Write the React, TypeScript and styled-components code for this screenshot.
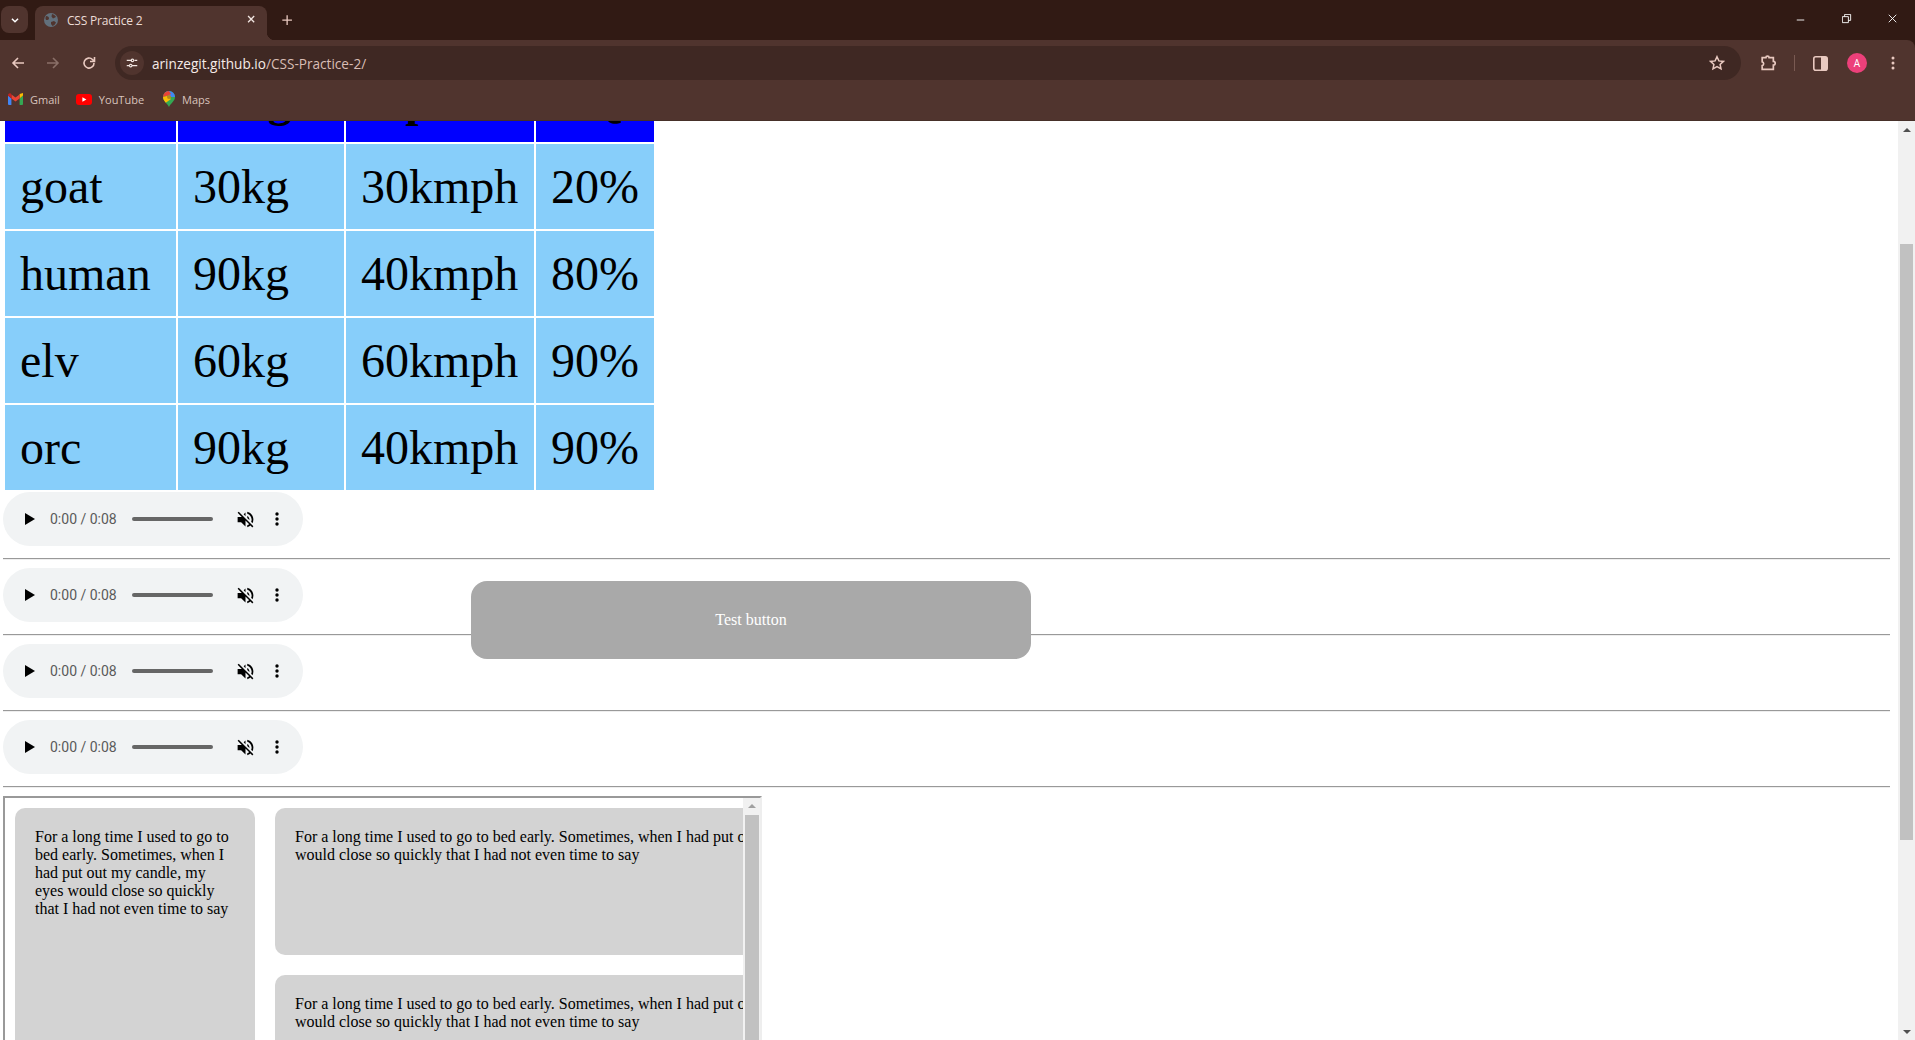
import * as React from "react"
import styled, { createGlobalStyle } from "styled-components"

const rows = [
  ["goat", "30kg", "30kmph", "20%"],
  ["human", "90kg", "40kmph", "80%"],
  ["elv", "60kg", "60kmph", "90%"],
  ["orc", "90kg", "40kmph", "90%"],
]
const columns = [
  { title: "Name", width: 171 },
  { title: "Weight", width: 166 },
  { title: "Speed", width: 188 },
  { title: "IQ", width: 118 },
]
const story = "For a long time I used to go to bed early. Sometimes, when I had put out my candle, my eyes would close so quickly that I had not even time to say"
const ICON = "#e9c9c0"

const GlobalStyle = createGlobalStyle`
  html, body {
    margin: 0;
    height: 100%;
    overflow: hidden;
    background: #fff;
  }
`

const Shell = styled.div`
  display: flex;
  flex-direction: column;
  height: 100vh;
  font-family: "Liberation Serif", serif;
`

const Browser = styled.header`
  position: relative;
  z-index: 1;
  flex: none;
  height: 121px;
  background: #311a14;
  font-family: "Open Sans", "Noto Sans", sans-serif;
`

const TitleBar = styled.div`
  display: flex;
  align-items: flex-start;
  height: 40px;
  padding: 6px 0 0 1px;
  box-sizing: border-box;
`

const TabListButton = styled.div`
  display: flex;
  align-items: center;
  justify-content: center;
  width: 27px;
  height: 27px;
  border-radius: 8px;
  background: #50342e;
`

const Tab = styled.div`
  position: relative;
  display: flex;
  align-items: center;
  width: 232px;
  height: 34px;
  margin-left: 7px;
  padding: 0 8px 6px 9px;
  box-sizing: border-box;
  background: #50342e;
  border-radius: 8px 8px 0 0;

  &::after {
    content: "";
    position: absolute;
    right: -8px;
    bottom: 0;
    width: 8px;
    height: 8px;
    background: radial-gradient(circle at 100% 0, transparent 8px, #50342e 8.5px);
  }
`

const TabTitle = styled.span`
  flex: 1;
  margin-left: 9px;
  font-size: 12px;
  letter-spacing: -0.2px;
  color: #ecdcd6;
`

const NewTab = styled.div`
  display: flex;
  margin: 8px 0 0 14px;
`

const WindowControls = styled.div`
  display: flex;
  align-items: center;
  gap: 34px;
  height: 28px;
  margin-left: auto;
  padding-right: 15px;
`

const Toolbar = styled.div`
  display: flex;
  align-items: center;
  height: 41px;
  padding: 5px 0 0 10px;
  box-sizing: border-box;
  background: #50342e;
  border-radius: 0 8px 0 0;
`

const NavButton = styled.div<{ $gap: number }>`
  display: flex;
  margin-right: ${(p) => p.$gap}px;
`

const Omnibox = styled.div`
  display: flex;
  align-items: center;
  width: 1626px;
  height: 34px;
  margin-left: 18px;
  padding: 0 16px 0 5px;
  box-sizing: border-box;
  background: #3f2823;
  border-radius: 17px;
`

const SiteInfo = styled.div`
  display: flex;
  align-items: center;
  justify-content: center;
  width: 24px;
  height: 24px;
  border-radius: 50%;
  background: #50342e;
`

const Url = styled.span`
  flex: 1;
  margin-left: 8px;
  font-size: 13.6px;
  color: #d9bdb5;

  b {
    font-weight: 400;
    color: #f6ebe7;
  }
`

const ToolbarEnd = styled.div`
  display: flex;
  align-items: center;
  margin-left: 18px;
`

const Divider = styled.div`
  width: 1px;
  height: 16px;
  margin: 0 18px 0 18px;
  background: #7a5a52;
`

const Avatar = styled.div`
  display: flex;
  align-items: center;
  justify-content: center;
  width: 20px;
  height: 20px;
  margin: 0 24px 0 19px;
  border-radius: 50%;
  background: #ec407a;
  color: #fff;
  font-size: 10px;
`

const Bookmarks = styled.div`
  display: flex;
  align-items: center;
  height: 40px;
  padding: 0 0 3px 8px;
  box-sizing: border-box;
  background: #50342e;
  border-bottom: 1px solid #463029;
`

const Bookmark = styled.div<{ $gap: number }>`
  display: flex;
  align-items: center;
  gap: 7px;
  margin-right: ${(p) => p.$gap}px;
  font-size: 11px;
  color: #d9c3bc;
`

const Viewport = styled.main`
  display: flex;
  flex: 1;
  min-height: 0;
`

const Page = styled.div`
  position: relative;
  flex: 1;
  min-width: 0;
  overflow: hidden;
`

// the page is shown scrolled down by 66px
const PageBody = styled.div`
  margin-top: -66px;
  padding: 0 8px 0 3px;
`

const AnimalTable = styled.table`
  display: table;
  width: 653px;
  table-layout: fixed;
  border-collapse: separate;
  border-spacing: 2px;
  font-size: 48px;
  color: #000;
`

const HeadCell = styled.th<{ $width: number }>`
  width: ${(p) => p.$width}px;
  padding: 15px 0;
  background: #00f;
  font-weight: 700;
  text-align: center;
`

const Cell = styled.td`
  padding: 15px;
  background: #87cefa;
`

const AudioPlayer = styled.div`
  display: flex;
  align-items: center;
  width: 300px;
  height: 54px;
  border-radius: 27px;
  background: #f1f3f4;
`

const PlayIcon = styled.svg`
  margin-left: 22px;
`

const AudioTime = styled.span`
  margin-left: 15px;
  width: 82px;
  font-family: "Roboto", sans-serif;
  font-size: 14px;
  color: #5a5a5a;
`

const AudioTrack = styled.div`
  width: 81px;
  height: 4px;
  border-radius: 2px;
  background: #666;
`

const MuteIcon = styled.svg`
  margin-left: 22px;
`

const AudioMenu = styled.svg`
  margin-left: 19px;
`

const Rule = styled.hr`
  height: 0;
  margin: 12px 0 8px;
  border-width: 1px 0;
  border-style: solid;
  border-color: #999 transparent #eee;
`

const ScrollBox = styled.div`
  display: flex;
  height: 400px;
  width: 759px;
  box-sizing: border-box;
  border: 2px solid;
  border-color: #999 #eee #eee #999;
`

const ScrollBoxView = styled.div`
  flex: 1;
  min-width: 0;
  overflow: hidden;
  padding: 10px;
`

const CardGrid = styled.div`
  display: grid;
  grid-template-columns: 240px 640px;
  grid-auto-rows: 147px;
  gap: 20px;
`

const Card = styled.div<{ $tall?: boolean }>`
  grid-row: ${(p) => (p.$tall ? "span 2" : "auto")};
  padding: 20px;
  box-sizing: border-box;
  border-radius: 10px;
  background: #d3d3d3;
  font-size: 16px;
  color: #000;
`

const BoxScrollbar = styled.div`
  display: flex;
  flex: none;
  flex-direction: column;
  align-items: center;
  width: 17px;
  padding-top: 6px;
  box-sizing: border-box;
  background: #f1f1f1;
`

const BoxThumb = styled.div`
  flex: 1;
  width: 14px;
  margin-top: 7px;
  background: #c1c1c1;
`

const TestButton = styled.button`
  position: absolute;
  left: 471px;
  top: 460px;
  width: 560px;
  height: 78px;
  border: 0;
  border-radius: 16px;
  background: #a9a9a9;
  color: #fff;
  font-family: "Liberation Serif", serif;
  font-size: 16px;
`

const PageScrollbar = styled.div`
  display: flex;
  flex: none;
  flex-direction: column;
  align-items: center;
  width: 17px;
  padding: 7px 0 6px;
  box-sizing: border-box;
  background: #f1f1f1;
`

const PageThumb = styled.div`
  width: 13px;
  height: 596px;
  margin: 112px 0 auto;
  background: #c1c1c1;
`

const Arrow = ({ down, color = "#505050", size = 8 }: { down?: boolean; color?: string; size?: number }) => (
  <svg width={size} height={size / 2} viewBox="0 0 8 4">
    <path d={down ? "M0 0h8L4 4z" : "M0 4h8L4 0z"} fill={color} />
  </svg>
)

const Line = ({ d, size = 16, width = 1.6, color = ICON }: { d: string; size?: number; width?: number; color?: string }) => (
  <svg width={size} height={size} viewBox="0 0 16 16" fill="none" stroke={color} strokeWidth={width}>
    <path d={d} />
  </svg>
)

const GmailIcon = () => (
  <svg width="15" height="12" viewBox="0 0 15 12">
    <path d="M0 2.5V11a1 1 0 0 0 1 1h2.4V5.4z" fill="#4285f4" />
    <path d="M15 2.5V11a1 1 0 0 1-1 1h-2.4V5.4z" fill="#34a853" />
    <path d="M11.6 1 15 0v2.5l-3.4 2.9z" fill="#fbbc04" />
    <path d="M3.4 5.4V1.5L7.5 4.6l4.1-3.1v3.9L7.5 8.5z" fill="#ea4335" />
    <path d="M0 2.5C0 .7 2 -.4 3.4 .9v4.5z" fill="#c5221f" />
  </svg>
)

const YouTubeIcon = () => (
  <svg width="16" height="11" viewBox="0 0 16 11">
    <rect width="16" height="11" rx="3" fill="#f00" />
    <path d="M6.4 3.2v4.6l4-2.3z" fill="#fff" />
  </svg>
)

const MapsIcon = () => (
  <svg width="12" height="16" viewBox="0 0 12 16">
    <clipPath id="maps-pin">
      <path d="M6 0a6 6 0 0 0-6 6c0 4 4 6 6 10 2-4 6-6 6-10a6 6 0 0 0-6-6z" />
    </clipPath>
    <g clipPath="url(#maps-pin)">
      <rect width="12" height="16" fill="#34a853" />
      <path d="M0 0h12v6L6 6z" fill="#4285f4" />
      <path d="M0 0h6l2 3-4 2-4 1z" fill="#ea4335" />
      <path d="M0 6l4-1 4 3-7 5L0 10z" fill="#fbbc04" />
      <circle cx="6" cy="6" r="2" fill="#b78a1c" />
    </g>
  </svg>
)

const Audio = () => (
  <AudioPlayer>
    <PlayIcon width="10" height="12" viewBox="0 0 10 12">
      <path d="M0 0l10 6-10 6z" fill="#000" />
    </PlayIcon>
    <AudioTime>0:00 / 0:08</AudioTime>
    <AudioTrack />
    <MuteIcon width="21" height="21" viewBox="0 0 24 24">
      <path
        d="M16.5 12c0-1.770-1.020-3.290-2.500-4.030v2.210l2.450 2.450c.03-.2.05-.41.05-.63zm2.500 0c0 .94-.2 1.820-.54 2.640l1.510 1.510C20.630 14.910 21 13.500 21 12c0-4.280-2.990-7.860-7-8.770v2.060c2.890.86 5 3.540 5 6.710zM4.270 3L3 4.270 7.730 9H3v6h4l5 5v-6.730l4.250 4.250c-.67.52-1.420.93-2.250 1.180v2.060c1.380-.31 2.630-.95 3.690-1.810L19.730 21 21 19.730l-9-9L4.270 3zM12 4L9.910 6.090 12 8.180V4z"
        fill="#000"
      />
    </MuteIcon>
    <AudioMenu width="4" height="14" viewBox="0 0 4 14">
      <circle cx="2" cy="2" r="1.700" fill="#000" />
      <circle cx="2" cy="7" r="1.700" fill="#000" />
      <circle cx="2" cy="12" r="1.700" fill="#000" />
    </AudioMenu>
  </AudioPlayer>
)

export default function App() {
  return (
    <Shell>
      <GlobalStyle />
      <Browser>
        <TitleBar>
          <TabListButton>
            <Line d="M4.500 6.500 8 10l3.500-3.500" size={14} width={1.7} color="#fff" />
          </TabListButton>
          <Tab>
            <svg width="14" height="14" viewBox="0 0 14 14">
              <circle cx="7" cy="7" r="7" fill="#62707c" />
              <path d="M2 3c2 0 3 1 3 2.500S3.500 7 2.500 7 1 5 2 3zM8 1c2 .5 3.500 1.500 4 3L9 5.500 7.500 3.500zM7 9l3-1 2 1.500C11.500 11 10 12.500 8.500 13L7 11z" fill="#50342e" />
            </svg>
            <TabTitle>CSS Practice 2</TabTitle>
            <Line d="M3.500 3.500l7 7m0-7l-7 7" size={14} width={1.500} color="#f2e6e2" />
          </Tab>
          <NewTab>
            <Line d="M7 1.500v11M1.500 7h11" size={14} width={1.500} color="#e9c9c0" />
          </NewTab>
          <WindowControls>
            <Line d="M1 8h10" size={12} width={1.200} color="#fff" />
            <Line d="M.5 3.500h8v8h-8zM3.500 3.500v-3h8v8h-3" size={12} width={1.200} color="#fff" />
            <Line d="M1 1l10 10m0-10L1 11" size={12} width={1.200} color="#fff" />
          </WindowControls>
        </TitleBar>
        <Toolbar>
          <NavButton $gap={19}>
            <Line d="M14 8H3M8 3 3 8l5 5" />
          </NavButton>
          <NavButton $gap={20}>
            <Line d="M2 8h11M8 3l5 5-5 5" color="#8a6f68" />
          </NavButton>
          <NavButton $gap={0}>
            <Line d="M13 8a5 5 0 1 1-1.500-3.500L13.500 6.500M13.500 2v4.500H9" />
          </NavButton>
          <Omnibox>
            <SiteInfo>
              <Line d="M2 5h6m3 0h3M2 11h3m3 0h6M8.500 3.500a1.500 1.500 0 1 0 .01 0M6.500 9.500a1.500 1.500 0 1 0 .01 0" size={14} width={1.300} color="#f2e6e2" />
            </SiteInfo>
            <Url>
              <b>arinzegit.github.io</b>/CSS-Practice-2/
            </Url>
            <Line d="M8 1.700 9.900 5.900l4.500.5-3.300 3 .9 4.500L8 11.600 4 13.900l.9-4.500-3.300-3 4.500-.5z" size={16} width={1.500} />
          </Omnibox>
          <ToolbarEnd>
            <Line d="M6.500 2.500a1.500 1.500 0 0 1 3 0H13.500v3.500a1.500 1.500 0 0 1 0 3.500v4H3v-3.500a1.800 1.800 0 0 0 0-3.500V2.500z" size={17} width={1.600} />
            <Divider />
            <svg width="15" height="15" viewBox="0 0 15 15">
              <rect x=".8" y=".8" width="13.400" height="13.400" rx="2" fill="none" stroke={ICON} strokeWidth="1.600" />
              <rect x="8" y="1" width="6" height="13" fill={ICON} />
            </svg>
            <Avatar>A</Avatar>
            <svg width="4" height="14" viewBox="0 0 4 14">
              <circle cx="2" cy="2" r="1.500" fill={ICON} />
              <circle cx="2" cy="7" r="1.500" fill={ICON} />
              <circle cx="2" cy="12" r="1.500" fill={ICON} />
            </svg>
          </ToolbarEnd>
        </Toolbar>
        <Bookmarks>
          <Bookmark $gap={16}>
            <GmailIcon />
            Gmail
          </Bookmark>
          <Bookmark $gap={19}>
            <YouTubeIcon />
            YouTube
          </Bookmark>
          <Bookmark $gap={0}>
            <MapsIcon />
            Maps
          </Bookmark>
        </Bookmarks>
      </Browser>
      <Viewport>
        <Page>
          <PageBody>
            <AnimalTable>
              <thead>
                <tr>
                  {columns.map((c) => (
                    <HeadCell key={c.title} $width={c.width}>
                      {c.title}
                    </HeadCell>
                  ))}
                </tr>
              </thead>
              <tbody>
                {rows.map((r) => (
                  <tr key={r[0]}>
                    {r.map((v) => (
                      <Cell key={v}>{v}</Cell>
                    ))}
                  </tr>
                ))}
              </tbody>
            </AnimalTable>
            {[0, 1, 2, 3].map((i) => (
              <React.Fragment key={i}>
                <Audio />
                <Rule />
              </React.Fragment>
            ))}
            <ScrollBox>
              <ScrollBoxView>
                <CardGrid>
                  <Card $tall>{story}</Card>
                  <Card>{story}</Card>
                  <Card>{story}</Card>
                </CardGrid>
              </ScrollBoxView>
              <BoxScrollbar>
                <Arrow color="#a0a0a0" />
                <BoxThumb />
              </BoxScrollbar>
            </ScrollBox>
          </PageBody>
          <TestButton>Test button</TestButton>
        </Page>
        <PageScrollbar>
          <Arrow />
          <PageThumb />
          <Arrow down />
        </PageScrollbar>
      </Viewport>
    </Shell>
  )
}
